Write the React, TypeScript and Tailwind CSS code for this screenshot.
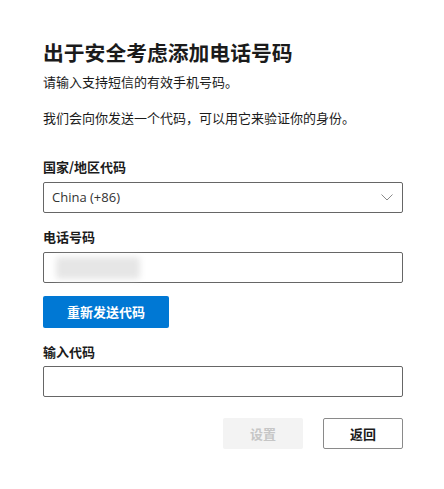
import { useState } from "react";

const font = { fontFamily: '"Noto Sans CJK SC", "Noto Sans", sans-serif' };

export default function App() {
  const [code, setCode] = useState("");

  return (
    <div className="min-h-[489px] w-[444px] bg-white text-[#1b1b1b]" style={font}>
      <div className="pl-[43px] pr-[41px] pt-[38px]">
        <h1 className="text-[20.8px] font-bold leading-[28px]">出于安全考虑添加电话号码</h1>
        <p className="mt-[6px] text-[13px] leading-[20px]">请输入支持短信的有效手机号码。</p>
        <p className="mt-[16px] text-[13px] leading-[20px]">我们会向你发送一个代码，可以用它来验证你的身份。</p>

        <label className="mt-[29px] block text-[13px] font-semibold leading-[20px]">国家/地区代码</label>
        <div className="mt-[5px] flex h-[31px] items-center justify-between rounded-[2px] border border-[#666] px-[8px]">
          <span className="text-[13px] text-[#333]" style={{ fontFamily: '"Open Sans", "Noto Sans", sans-serif' }}>China (+86)</span>
          <svg width="12" height="7" viewBox="0 0 12 7" className="mr-[1px]">
            <path d="M0.5 0.5 L6 6 L11.5 0.5" fill="none" stroke="#8a8a8a" strokeWidth="1" />
          </svg>
        </div>

        <label className="mt-[14px] block text-[13px] font-semibold leading-[20px]">电话号码</label>
        <div className="relative mt-[5px] h-[31px] rounded-[2px] border border-[#666]">
          <div className="absolute left-[12px] top-[4px] h-[22px] w-[84px] rounded-[3px] bg-[#e6e6e6] blur-[3px]" />
        </div>

        <button className="mt-[13px] flex h-[32px] w-[126px] items-center justify-center rounded-[2px] bg-[#0078d4] text-[13px] font-bold text-white">
          重新发送代码
        </button>

        <label className="mt-[14px] block text-[13px] font-semibold leading-[20px]">输入代码</label>
        <input
          value={code}
          onChange={e => setCode(e.target.value)}
          className="mt-[4px] block h-[31px] w-full rounded-[2px] border border-[#666] px-[8px] text-[13px] outline-none"
        />

        <div className="mt-[21px] flex justify-end gap-[20px]">
          <button disabled className="h-[31px] w-[80px] rounded-[2px] bg-[#f3f3f3] text-[13px] font-bold text-[#c6c6c6]">设置</button>
          <button className="h-[31px] w-[80px] rounded-[2px] border border-[#8a8a8a] bg-white text-[13px] font-bold text-[#1b1b1b]">返回</button>
        </div>
      </div>
    </div>
  );
}
